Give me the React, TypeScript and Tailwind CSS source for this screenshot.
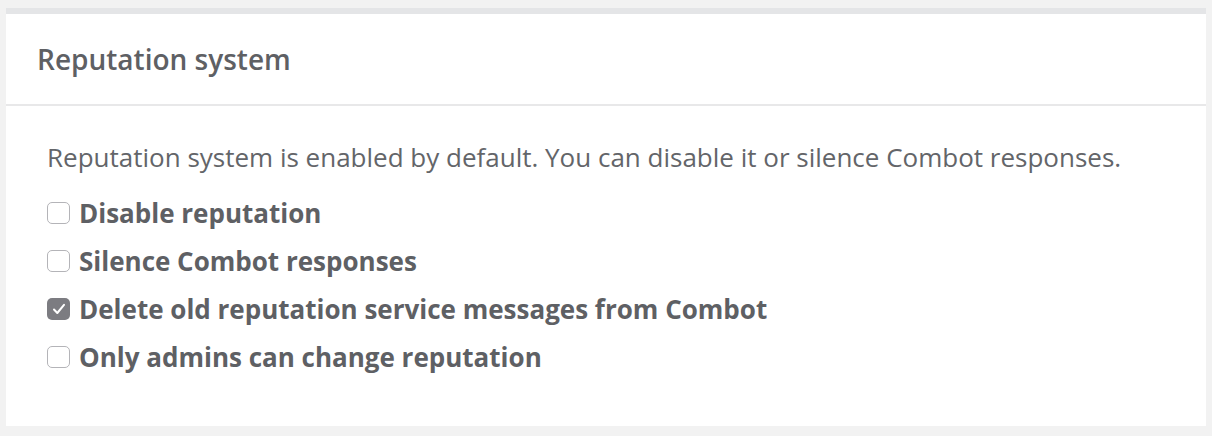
import React from "react";

const items = [
  { label: "Disable reputation", checked: false },
  { label: "Silence Combot responses", checked: false },
  { label: "Delete old reputation service messages from Combot", checked: true },
  { label: "Only admins can change reputation", checked: false },
];

function Box({ checked }: { checked: boolean }) {
  if (checked) {
    return (
      <span className="flex h-[22px] w-[23px] shrink-0 items-center justify-center rounded-[5px] bg-[#7c7c81]">
        <svg width="16" height="16" viewBox="0 0 16 16" fill="none">
          <path d="M3 8.5 L6.3 12 L13 3.8" stroke="#ffffff" strokeWidth="2" strokeLinecap="round" strokeLinejoin="round" />
        </svg>
      </span>
    );
  }
  return <span className="h-[22px] w-[23px] shrink-0 rounded-[5px] border border-[#b4b4b8] bg-white" />;
}

export default function App() {
  return (
    <div className="min-h-[436px] w-[1212px] bg-[#f2f2f2] pt-2 pl-[6px] pr-[6px] pb-[9px]" style={{ fontFamily: '"Open Sans", sans-serif' }}>
      <div className="border-t-[6px] border-[#e4e5e7] bg-white">
        <div className="flex h-[92px] items-center border-b-2 border-[#e8e8e9] pl-[31px]">
          <h2 className="text-[28px] font-semibold text-[#5e6064]">Reputation system</h2>
        </div>
        <div className="pl-[41px] pt-[34px] pb-[45px]">
          <p className="text-[26px] leading-[34px] text-[#636569]">
            Reputation system is enabled by default. You can disable it or silence Combot responses.
          </p>
          <div className="mt-[15px] flex flex-col">
            {items.map((it) => (
              <label key={it.label} className="flex h-[48px] items-center gap-[9px]">
                <Box checked={it.checked} />
                <span className="text-[26px] font-bold text-[#5e6064]">{it.label}</span>
              </label>
            ))}
          </div>
        </div>
      </div>
    </div>
  );
}
